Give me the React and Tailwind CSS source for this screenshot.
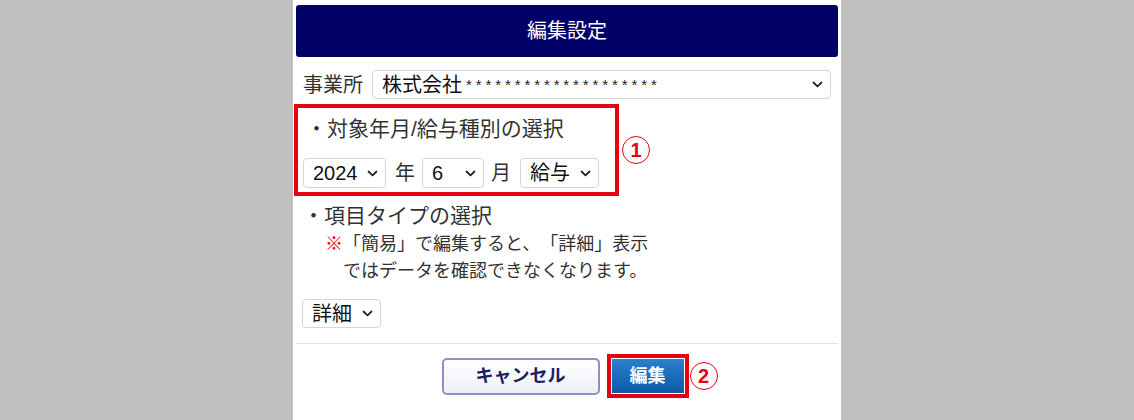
import React from 'react'

const font = "font-['Liberation_Sans','Noto_Sans_CJK_JP',sans-serif]"

function Chevron() {
  return (
    <svg width="11" height="7" viewBox="0 0 11 7" className="shrink-0">
      <path d="M1.5 1.5 L5.5 5.3 L9.5 1.5" fill="none" stroke="#222" strokeWidth="1.8" strokeLinecap="round" strokeLinejoin="round" />
    </svg>
  )
}

function FakeSelect({ className = '', children }) {
  return (
    <div className={`h-[30px] flex items-center justify-between pl-[9px] pr-[7px] bg-white border border-[#d6d6d6] rounded-[4px] text-[20px] text-[#111] leading-none ${className}`}>
      <span className="flex items-center">{children}</span>
      <Chevron />
    </div>
  )
}

function Num({ n }) {
  return (
    <div className="w-[28px] h-[28px] rounded-full border border-[#e60012] flex items-center justify-center text-[#e60012] text-[20px] font-bold leading-none">
      {n}
    </div>
  )
}

export default function App() {
  return (
    <div className={`w-full h-[420px] bg-[#c0c0c0] flex justify-center overflow-hidden [text-spacing-trim:space-all] ${font}`}>
      <div className="w-[548px] h-full bg-white px-[3px] pt-[5px]">
        {/* header */}
        <div className="h-[52px] rounded-[3px] bg-[#000066] flex items-center justify-center text-white text-[20px]">
          編集設定
        </div>

        {/* office row */}
        <div className="mt-[13px] flex items-center pl-[7px] pr-[7px]">
          <span className="text-[20px] text-[#333] leading-none">事業所</span>
          <FakeSelect className="ml-[9px] flex-1 !h-[29px]">
            <span>株式会社</span>
            <span className="text-[15px] tracking-[3.9px] ml-[4px] text-[#222]">********************</span>
          </FakeSelect>
        </div>

        {/* target month */}
        <div className="mt-[5px] flex items-center">
          <div className="ml-[-2px] w-[325px] border-[4px] border-[#e60012] pt-[8px] pb-[4px] pl-[5px]">
            <div className="text-[21px] leading-[26px] text-[#333] pl-[3px]">・対象年月/給与種別の選択</div>
            <div className="mt-[16px] flex items-center text-[20px] text-[#333]">
              <FakeSelect className="w-[83px]">2024</FakeSelect>
              <span className="ml-[9px] mr-[7px]">年</span>
              <FakeSelect className="w-[62px]">6</FakeSelect>
              <span className="ml-[7px] mr-[9px]">月</span>
              <FakeSelect className="w-[79px]">給与</FakeSelect>
            </div>
          </div>
          <div className="ml-[3px]"><Num n="1" /></div>
        </div>

        {/* item type */}
        <div className="mt-[7px] pl-[7px] text-[21px] leading-[26px] text-[#333]">・項目タイプの選択</div>
        <div className="mt-[2px] pl-[29px] flex text-[18px] leading-[27px] text-[#333]">
          <span className="w-[18px] text-[#e60012] font-bold">※</span>
          <div>
            <div>「簡易」で編集すると、「詳細」表示</div>
            <div>ではデータを確認できなくなります。</div>
          </div>
        </div>
        <div className="mt-[14px] pl-[6px]">
          <FakeSelect className="w-[79px] !h-[29px]">詳細</FakeSelect>
        </div>

        <div className="mt-[15px] h-px bg-[#e4e4e4]" />

        {/* buttons */}
        <div className="mt-[10px] flex items-center justify-center pr-[4px]">
          <button className="w-[158px] h-[37px] rounded-[5px] border-[2px] border-[#8a90c8] bg-gradient-to-b from-white to-[#eef0f6] text-[#1b1f5e] text-[18px] font-bold">
            キャンセル
          </button>
          <div className="relative ml-[7px]">
            <div className="w-[82px] h-[44px] border-[4px] border-[#e60012] p-px">
              <button className="w-full h-full bg-gradient-to-b from-[#2a7fd0] to-[#0a5aa6] text-white text-[18px] font-bold">
                編集
              </button>
            </div>
            <div className="absolute left-[83px] top-[8px]"><Num n="2" /></div>
          </div>
        </div>
      </div>
    </div>
  )
}
